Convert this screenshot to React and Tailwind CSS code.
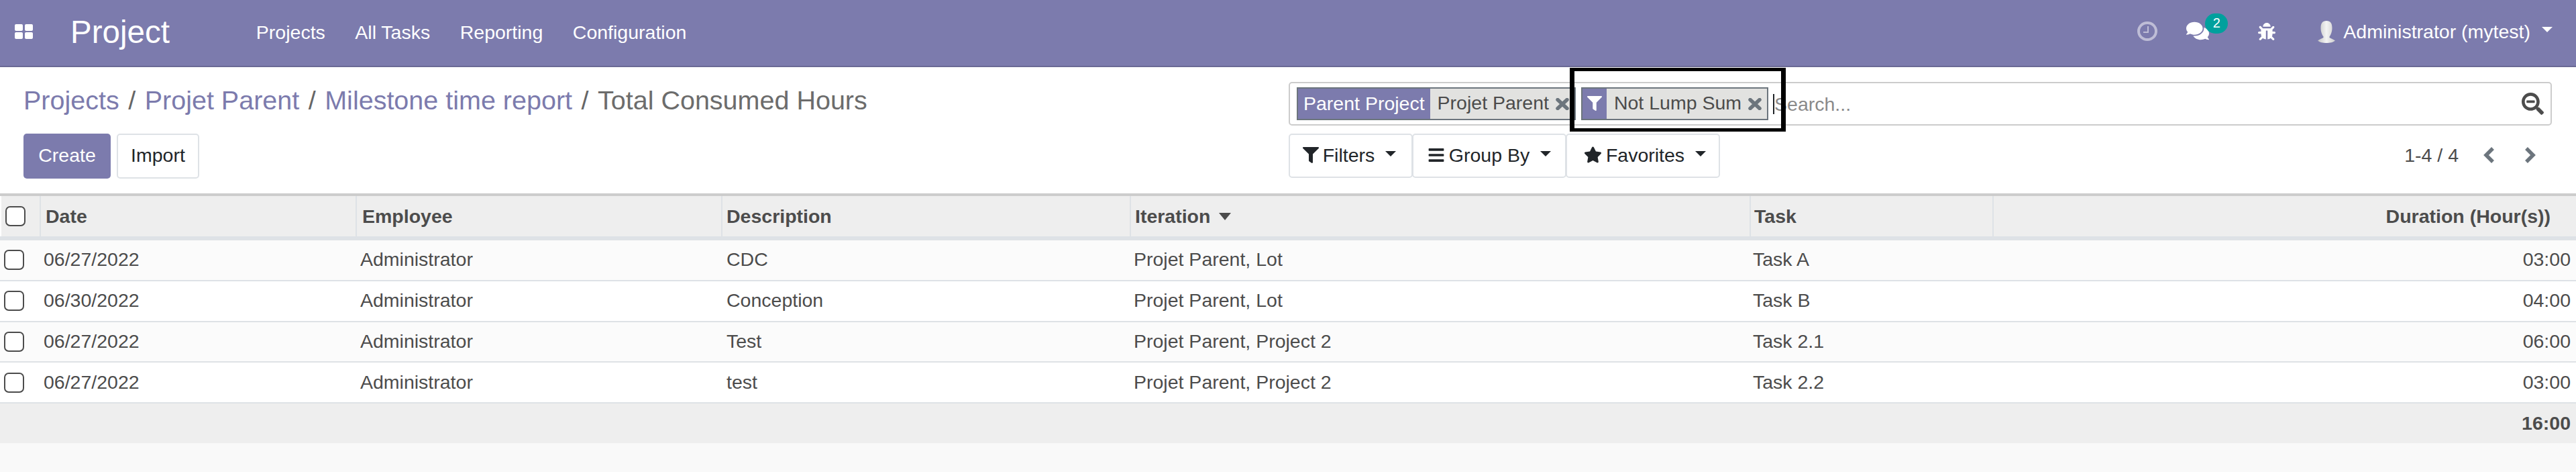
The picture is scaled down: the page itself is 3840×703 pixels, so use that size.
import React from 'react';
import { FaFilter, FaBars, FaStar, FaComments, FaBug, FaSearchMinus } from 'react-icons/fa';

const rows = [
  { date: '06/27/2022', desc: 'CDC', iter: 'Projet Parent, Lot', task: 'Task A', dur: '03:00' },
  { date: '06/30/2022', desc: 'Conception', iter: 'Projet Parent, Lot', task: 'Task B', dur: '04:00' },
  { date: '06/27/2022', desc: 'Test', iter: 'Projet Parent, Project 2', task: 'Task 2.1', dur: '06:00' },
  { date: '06/27/2022', desc: 'test', iter: 'Projet Parent, Project 2', task: 'Task 2.2', dur: '03:00' },
];

const cols = 'grid grid-cols-[59px_471px_545px_609px_924px_362px_870px]';

const Caret = ({ className }) => (
  <span className={`inline-block w-0 h-0 border-x-[8px] border-x-transparent border-t-[8px] ${className}`} />
);

const Avatar = () => (
  <svg width="26" height="33" viewBox="0 0 26 33">
    <defs>
      <linearGradient id="face" x1="0" y1="0" x2="1" y2="0">
        <stop offset="0" stopColor="#c4c4c4" />
        <stop offset="0.5" stopColor="#f4f4f4" />
        <stop offset="1" stopColor="#cdcdcd" />
      </linearGradient>
    </defs>
    <path d="M13 0c6 0 8.5 4 8.5 10.500 0 6-2 10.500-4 13v1.500c2 1.500 6 2.500 8.500 4.500-2.500 2.500-7.500 3.500-13 3.500S2.500 32 0 29.500c2.500-2 6.500-3 8.500-4.500v-1.500c-2-2.500-4-7-4-13C4.500 4 7 0 13 0z" fill="url(#face)" />
  </svg>
);

const CloseX = () => (
  <svg width="20" height="18" viewBox="0 0 20 18" className="text-[#6c757d]">
    <path d="M3 2.500l14 13M17 2.500l-14 13" stroke="currentColor" strokeWidth="5.500" strokeLinecap="round" />
  </svg>
);

const Chevron = ({ left, className }) => (
  <svg width="17" height="26" viewBox="0 0 17 26" className={className}>
    <path d={left ? 'M14 3L4 13l10 10' : 'M3 3l10 10L3 23'} fill="none" stroke="#6c757d" strokeWidth="5.500" />
  </svg>
);

const Nav = () => (
  <header className="h-[100px] bg-[#7c7bad] border-b-2 border-[#6a6995] flex items-center text-white pl-[22px] pr-[35px]">
    <svg width="27" height="22" viewBox="0 0 27 22" fill="#fff" className="mr-[56px] -mt-[4px]">
      <rect x="0" y="0" width="12" height="10" rx="2" />
      <rect x="15" y="0" width="12" height="10" rx="2" />
      <rect x="0" y="12" width="12" height="10" rx="2" />
      <rect x="15" y="12" width="12" height="10" rx="2" />
    </svg>
    <span className="text-[47.5px] leading-none -mt-[2px] mr-[129px]">Project</span>
    <nav className="flex gap-[44.5px] -mt-[2px]">
      <span>Projects</span>
      <span>All Tasks</span>
      <span>Reporting</span>
      <span>Configuration</span>
    </nav>
    <div className="ml-auto flex items-center -mt-[4px]">
      <svg width="30" height="29" viewBox="0 0 30 29" fill="none" className="mr-[43px] -mt-[2px]">
        <ellipse cx="15" cy="14.5" rx="13" ry="12.5" stroke="#fff" strokeOpacity="0.5" strokeWidth="4" />
        <path d="M16 7v9H9" stroke="#fff" strokeOpacity="0.5" strokeWidth="2" />
      </svg>
      <div className="relative mr-[73px] -mt-[2px]">
        <FaComments size={34} className="text-white" />
        <span className="absolute -top-[9px] left-[28px] w-[34px] h-[30px] rounded-full bg-[#00a09d] text-[20px] leading-[28px] text-center">2</span>
      </div>
      <FaBug size={26} className="mr-[63px]" />
      <Avatar />
      <span className="ml-[12px]">Administrator (mytest)</span>
      <Caret className="ml-[17px] -mt-[6px] border-t-white" />
    </div>
  </header>
);

const Facet = ({ label, icon, value }) => (
  <div className="flex h-[49px] border-2 border-[#6c757d] bg-[#e2e2e0] items-center">
    <span className={`h-full flex items-center bg-[#7c7bad] text-white ${icon ? 'px-[7px]' : 'px-[8px]'}`}>
      <span className="-mt-[2px] flex">{icon || label}</span>
    </span>
    <span className="pl-[11px] pr-[8px] text-[#4c4c4c] flex items-center gap-[10px]">
      <span className="-mt-[3px]">{value}</span>
      <CloseX />
    </span>
  </div>
);

const ControlPanel = () => (
  <section className="h-[188px] bg-white flex pl-[35px] pr-[36px] relative">
    <div className="w-[1886px] shrink-0">
      <div className="flex items-center h-[46px] mt-[27px] text-[39.5px] leading-none text-[#7c7bad] gap-[13.5px]">
        <span>Projects</span><span className="text-[#666]">/</span>
        <span>Projet Parent</span><span className="text-[#666]">/</span>
        <span>Milestone time report</span><span className="text-[#666]">/</span>
        <span className="text-[#6c6c6c]">Total Consumed Hours</span>
      </div>
      <div className="flex gap-[9px] mt-[26px]">
        <button className="w-[130px] h-[67px] pb-[3px] bg-[#7c7bad] text-white rounded-[5px]">Create</button>
        <button className="w-[123px] h-[67px] pb-[3px] bg-white text-[#212529] border-2 border-[#dee2e6] rounded-[5px]">Import</button>
      </div>
    </div>
    <div className="flex-1 pt-[22px]">
      <div className="h-[65px] border-2 border-[#ccc] rounded-[5px] flex items-center pl-[10px] pr-[10px]">
        <Facet label="Parent Project" value="Projet Parent" />
        <div className="w-[8px]" />
        <Facet icon={<FaFilter size={22} />} value="Not Lump Sum" />
        <div className="ml-[7px] w-[2px] h-[30px] bg-[#212529]" />
        <span className="text-[#8a8a8a]">Search...</span>
        <FaSearchMinus size={33} className="ml-auto text-[#4c4c4c]" />
      </div>
      <div className="flex items-center mt-[12px]">
        <div className="flex text-[#212529]">
          <button className="w-[185px] h-[66px] pb-[3px] border-2 border-[#dee2e6] rounded-[5px] flex items-center justify-center gap-[6px] pr-[4px]">
            <FaFilter size={24} /> Filters <Caret className="ml-[10px] -mt-[4px] border-t-[#212529]" />
          </button>
          <button className="w-[230px] h-[66px] pb-[3px] border-2 border-[#dee2e6] rounded-[5px] -ml-[1px] flex items-center justify-center gap-[6px]">
            <FaBars size={26} /> Group By <Caret className="ml-[10px] -mt-[4px] border-t-[#212529]" />
          </button>
          <button className="w-[230px] h-[66px] pb-[3px] border-2 border-[#dee2e6] rounded-[5px] -ml-[1px] flex items-center justify-center gap-[6px] pl-[6px]">
            <FaStar size={27} /> Favorites <Caret className="ml-[10px] -mt-[4px] border-t-[#212529]" />
          </button>
        </div>
        <div className="ml-auto flex items-center text-[#4c4c4c] pr-[24px] pb-[3px]">
          <span>1-4 / 4</span>
          <Chevron left className="ml-[37px]" />
          <Chevron className="ml-[44px]" />
        </div>
      </div>
    </div>
    {/* annotation rectangle drawn on the screenshot */}
    <div className="absolute left-[2340px] top-[1px] w-[322px] h-[95px] border-x-[7px] border-y-[5px] border-black pointer-events-none" />
  </section>
);

const Check = ({ className }) => (
  <span className={`block w-[30px] h-[30px] border-2 border-[#4c4c4c] rounded-[7px] bg-white ${className}`} />
);

const Table = () => (
  <div className="text-[#4c4c4c]">
    <div className={`${cols} h-[64px] bg-[#eee] border-t-[4px] border-[#ccc] font-bold`}>
      <div className="border-l-2 border-[#fff] flex items-center"><Check className="ml-[6px] bg-transparent" /></div>
      <div className="border-l-2 border-[#dee2e6] pl-[7px] flex items-center">Date</div>
      <div className="border-l-2 border-[#dee2e6] pl-[8px] flex items-center">Employee</div>
      <div className="border-l-2 border-[#dee2e6] pl-[6px] flex items-center">Description</div>
      <div className="border-l-2 border-[#dee2e6] pl-[6px] flex items-center gap-[13px]">
        Iteration
        <span className="w-0 h-0 border-x-[9px] border-x-transparent border-t-[11px] border-t-[#4c4c4c]" />
      </div>
      <div className="border-l-2 border-[#dee2e6] pl-[5px] flex items-center">Task</div>
      <div className="border-l-2 border-[#dee2e6] pr-[38px] justify-end flex items-center">Duration (Hour(s))</div>
    </div>
    <div className="h-[6px] bg-[#dee2e6]" />
    {rows.map((row, i) => (
      <div key={i} className={`${cols} h-[60.75px] border-b-2 border-[#dee2e6] ${i % 2 === 0 ? 'bg-[#fbfbfb]' : 'bg-white'}`}>
        <div className="flex items-center"><Check className="ml-[6px]" /></div>
        <div className="pl-[6px] pb-[2px] flex items-center">{row.date}</div>
        <div className="pl-[7px] pb-[2px] flex items-center">Administrator</div>
        <div className="pl-[8px] pb-[2px] flex items-center">{row.desc}</div>
        <div className="pl-[6px] pb-[2px] flex items-center">{row.iter}</div>
        <div className="pl-[5px] pb-[2px] flex items-center">{row.task}</div>
        <div className="col-start-7 pr-[8px] pb-[2px] flex items-center justify-end">{row.dur}</div>
      </div>
    ))}
    <div className="h-[59px] bg-[#eee] flex items-center justify-end pr-[8px] pb-[2px] font-bold">16:00</div>
  </div>
);

export default function App() {
  return (
    <div className="w-[3840px] h-[703px] bg-[#f9f9f9] overflow-hidden font-['Liberation_Sans',Arial,sans-serif] text-[28.5px] leading-[42px]">
      <Nav />
      <ControlPanel />
      <Table />
    </div>
  );
}
